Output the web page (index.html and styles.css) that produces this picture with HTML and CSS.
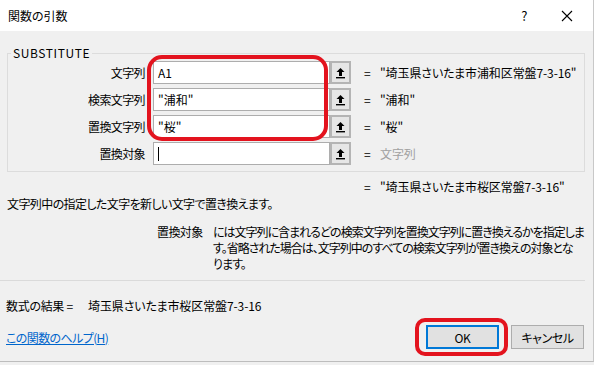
FILE: index.html
```html
<!DOCTYPE html>
<html lang="ja">
<head>
<meta charset="utf-8">
<title>関数の引数</title>
<link rel="stylesheet" href="styles.css">
</head>
<body>
<div class="dialog">
  <div class="titlebar">
    <span class="title">関数の引数</span>
    <span class="tb-help">?</span>
    <span class="tb-close">
      <svg width="12" height="12" viewBox="0 0 12 12"><path d="M1 1L11 11M11 1L1 11" stroke="#000" stroke-width="1.1" fill="none"/></svg>
    </span>
  </div>
  <div class="body">
    <fieldset class="group">
      <legend class="legend">SUBSTITUTE</legend>
      <div class="rows">
        <div class="row">
          <span class="label">文字列</span>
          <span class="field">A1</span>
          <span class="ref"><svg width="11" height="12" viewBox="0 0 11 12"><path d="M5.5 1L1.5 5H4V9H7V5H9.5Z" fill="#000"/><rect x="1" y="10" width="9" height="1.4" fill="#000"/></svg></span>
          <span class="eq">=</span>
          <span class="val">"埼玉県さいたま市浦和区常盤7-3-16"</span>
        </div>
        <div class="row">
          <span class="label">検索文字列</span>
          <span class="field">"浦和"</span>
          <span class="ref"><svg width="11" height="12" viewBox="0 0 11 12"><path d="M5.5 1L1.5 5H4V9H7V5H9.5Z" fill="#000"/><rect x="1" y="10" width="9" height="1.4" fill="#000"/></svg></span>
          <span class="eq">=</span>
          <span class="val">"浦和"</span>
        </div>
        <div class="row">
          <span class="label">置換文字列</span>
          <span class="field">"桜"</span>
          <span class="ref"><svg width="11" height="12" viewBox="0 0 11 12"><path d="M5.5 1L1.5 5H4V9H7V5H9.5Z" fill="#000"/><rect x="1" y="10" width="9" height="1.4" fill="#000"/></svg></span>
          <span class="eq">=</span>
          <span class="val">"桜"</span>
        </div>
        <div class="row">
          <span class="label">置換対象</span>
          <span class="field"><span class="caret"></span></span>
          <span class="ref"><svg width="11" height="12" viewBox="0 0 11 12"><path d="M5.5 1L1.5 5H4V9H7V5H9.5Z" fill="#000"/><rect x="1" y="10" width="9" height="1.4" fill="#000"/></svg></span>
          <span class="eq">=</span>
          <span class="val muted">文字列</span>
        </div>
        <div class="highlight hl-fields"></div>
      </div>
    </fieldset>
    <div class="result-row">
      <span class="eq">=</span>
      <span class="val">"埼玉県さいたま市桜区常盤7-3-16"</span>
    </div>
    <div class="desc">文字列中の指定した文字を新しい文字で置き換えます。</div>
    <div class="argdesc">
      <span class="argname">置換対象</span>
      <div class="argtext">
        <div>には文字列に含まれるどの検索文字列を置換文字列に置き換えるかを指定しま</div>
        <div>す。省略された場合は、文字列中のすべての検索文字列が置き換えの対象とな</div>
        <div>ります。</div>
      </div>
    </div>
  </div>
  <div class="footer">
    <div class="formula-result"><span class="fr-label">数式の結果 =</span><span class="fr-value">埼玉県さいたま市桜区常盤7-3-16</span></div>
    <div class="actions">
      <a class="help" href="#">この関数のヘルプ(H)</a>
      <div class="buttons">
        <div class="btn-wrap">
          <button class="btn btn-default">OK</button>
          <div class="highlight hl-ok"></div>
        </div>
        <button class="btn">キャンセル</button>
      </div>
    </div>
  </div>
</div>
</body>
</html>
```
FILE: styles.css
```css
* { box-sizing: border-box; }
html, body { margin: 0; padding: 0; }
body {
  width: 594px;
  height: 365px;
  background: #f0f0f0;
  font-family: "Noto Sans CJK JP", "Noto Sans", sans-serif;
  font-size: 12px;
  font-feature-settings: "palt";
  letter-spacing: -0.6px;
  color: #000;
  overflow: hidden;
}
.dialog {
  width: 594px;
  height: 362px;
  background: #f0f0f0;
  border-right: 1px solid #c8c8c8;
  border-bottom: 1px solid #bdbdbd;
  display: flex;
  flex-direction: column;
}
.titlebar {
  height: 31px;
  background: #fff;
  display: flex;
  align-items: center;
  padding-left: 8px;
  flex-shrink: 0;
}
.title { flex: 1; font-size: 12px; letter-spacing: 0; }
.tb-help { width: 20px; font-size: 13px; margin-right: 27px; text-align: center; }
.tb-close { width: 12px; margin-right: 20px; display: flex; }
.body { padding: 0 8px 0 7px; }
.group {
  margin: 15px 0 0 0;
  padding: 1px 0 6px 0;
  border: 1px solid #dcdcdc;
  width: 578px;
  min-width: 0;
}
.legend {
  padding: 0 2px;
  margin-left: 3px;
  font-size: 12px;
  line-height: 14px;
  letter-spacing: 0.6px;
}
.rows {
  position: relative;
  display: flex;
  flex-direction: column;
  gap: 4px;
  padding-top: 0;
}
.row {
  display: flex;
  align-items: center;
  height: 23px;
}
.label {
  width: 137px;
  flex-shrink: 0;
  text-align: right;
  white-space: nowrap;
}
.field {
  margin-left: 8px;
  width: 177px;
  flex-shrink: 0;
  height: 23px;
  background: #fff;
  border: 1px solid #adadad;
  display: flex;
  align-items: center;
  padding-left: 4px;
  white-space: nowrap;
  letter-spacing: 0;
}
.caret { width: 1px; height: 14px; background: #000; }
.ref {
  width: 21px;
  flex-shrink: 0;
  height: 23px;
  background: #e6e6e6;
  border: 2px solid #b4b4b4;
  display: flex;
  align-items: center;
  justify-content: center;
}
.eq { margin-left: 13px; width: 16px; flex-shrink: 0; }
.val { white-space: nowrap; letter-spacing: -0.1px; }
.muted { color: #a0a0a0; }
.highlight {
  position: absolute;
  border: 4px solid #e3131e;
  pointer-events: none;
}
.hl-fields {
  left: 139px;
  top: -6px;
  width: 181px;
  height: 86px;
  border-radius: 15px;
}
.result-row {
  display: flex;
  padding-left: 350px;
  margin-top: 5px;
  height: 18px;
  align-items: center;
}
.result-row .eq { margin-left: 7px; }
.desc { margin-top: 0; height: 18px; line-height: 18px; white-space: nowrap; }
.argdesc {
  display: flex;
  margin-top: 11px;
  padding-left: 150px;
  line-height: 16px;
}
.argname { width: 56px; flex-shrink: 0; white-space: nowrap; }
.argtext { white-space: nowrap; letter-spacing: -1px; }
.footer {
  margin-top: auto;
  display: flex;
  flex-direction: column;
}
.formula-result {
  margin: 0 8px 0 0;
  border-top: 1px solid #dadada;
  padding: 16px 0 0 6px;
  height: 38px;
  white-space: nowrap;
  display: flex;
}
.fr-label { width: 82px; flex-shrink: 0; letter-spacing: -0.3px; }
.fr-value { letter-spacing: -0.1px; }
.actions {
  display: flex;
  align-items: center;
  justify-content: space-between;
  padding: 7px 9px 12px 6px;
}
.help { color: #0066cc; text-decoration: underline; font-size: 12px; }
.buttons { display: flex; gap: 12px; }
.btn-wrap { position: relative; }
.btn {
  width: 73px;
  height: 24px;
  background: #e1e1e1;
  border: 1px solid #adadad;
  font-family: inherit;
  font-size: 12px;
  font-feature-settings: "palt";
  letter-spacing: -0.4px;
  padding: 0;
  color: #000;
}
.btn-default { border: 2px solid #0078d7; }
.hl-ok {
  left: -11px;
  top: -7px;
  width: 93px;
  height: 38px;
  border-radius: 10px;
}
```
